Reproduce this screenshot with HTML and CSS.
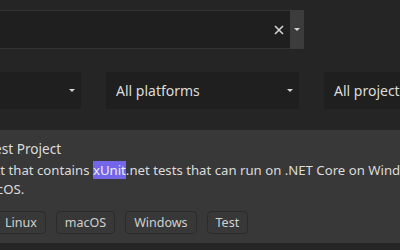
FILE: index.html
```
<!DOCTYPE html>
<html lang="en">
<head>
    <meta charset="UTF-8">
    <title>Create a new project</title>
    <link rel="stylesheet" href="styles.css">
</head>
<body>

<div class="page">
    <div class="search-row">
        <div class="search">
            <input class="search-input" type="text" value="">
            <span class="clear">
                <svg width="10" height="10" viewBox="0 0 10 10"><path d="M1 1L9 9M9 1L1 9" stroke="#d4d4d4" stroke-width="1.6"/></svg>
            </span>
        </div>
        <div class="search-drop"><span class="caret"></span></div>
    </div>

    <div class="filters">
        <div class="filter"><span>All languages</span><span class="caret"></span></div>
        <div class="filter"><span>All platforms</span><span class="caret"></span></div>
        <div class="filter"><span>All project types</span><span class="caret"></span></div>
    </div>

    <div class="card">
        <div class="card-title"><mark>xUnit</mark> Test Project</div>
        <div class="card-desc">
            <div>A project that contains <mark>xUnit</mark>.net tests that can run on .NET Core on Windows, Linux</div>
            <div>and macOS.</div>
        </div>
        <div class="tags">
            <span class="tag">C#</span>
            <span class="tag">Linux</span>
            <span class="tag">macOS</span>
            <span class="tag">Windows</span>
            <span class="tag">Test</span>
        </div>
    </div>
</div>

</body>
</html>
```
FILE: styles.css
```
body { margin: 0; background: #252526; font-family: "Noto Sans", "Open Sans", sans-serif; font-size: 13.2px; color: #dcdcdc; overflow: hidden; height: 250px; }
.page { margin-left: -112px; width: 700px; background: #1e1e1e; }
.search-row { display: flex; padding-top: 10px; background: #252526; }
.search { display: flex; align-items: center; width: 402px; height: 37px; background: #1f1f1f; border-top: 1px solid #333333; border-bottom: 1px solid #333333; }
.search-input { flex: 1; background: transparent; border: none; color: #dcdcdc; font: inherit; outline: none; }
.clear { display: flex; width: 10px; margin-right: 6px; }
.search-drop { display: flex; align-items: center; justify-content: center; width: 14px; height: 39px; background: #3c3c3c; }
.caret { display: inline-block; width: 0; height: 0; border-left: 3px solid transparent; border-right: 3px solid transparent; border-top: 3px solid #d4d4d4; }
.filters { display: flex; gap: 25px; padding: 23px 0 21px; background: #252526; }
.filter { display: flex; align-items: center; justify-content: space-between; width: 193px; height: 37px; padding: 0 6px 0 10px; box-sizing: border-box; background: #1f1f1f; font-size: 14px; }
.card { height: 113px; box-sizing: border-box; padding: 9px 0 0 62px; background: #383838; }
.card-title { line-height: 19px; font-size: 13.6px; }
.card-desc { margin-top: 3px; line-height: 19px; white-space: nowrap; }
mark { background: #7466e8; color: #eeeeee; padding: 0; }
.tags { display: flex; gap: 10px; margin-top: 12px; margin-left: 2px; }
.tag { height: 21px; padding: 0 8px; line-height: 21px; border: 1px solid #2b2b2b; border-radius: 4px; font-size: 12.5px; color: #d0d0d0; }
```
